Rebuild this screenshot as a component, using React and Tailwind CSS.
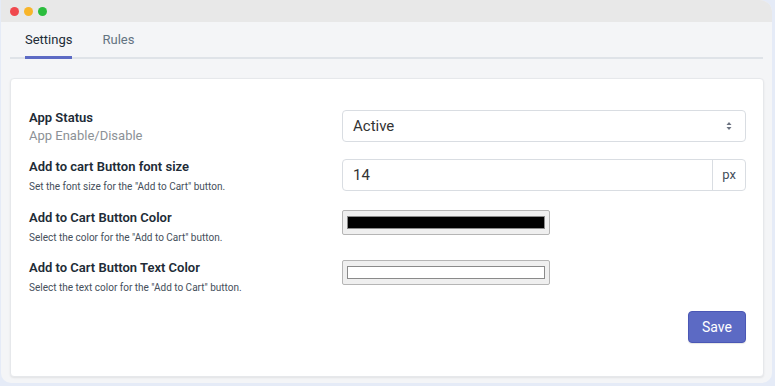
import { useState } from 'react';

const rows = [
  {
    title: 'Add to cart Button font size',
    hint: 'Set the font size for the "Add to Cart" button.',
    kind: 'size',
    gap: 'mt-[15px]',
  },
  {
    title: 'Add to Cart Button Color',
    hint: 'Select the color for the "Add to Cart" button.',
    kind: 'color',
    swatch: 'bg-black',
    gap: 'mt-[16px]',
  },
  {
    title: 'Add to Cart Button Text Color',
    hint: 'Select the text color for the "Add to Cart" button.',
    kind: 'color',
    swatch: 'bg-white',
    gap: 'mt-[15px]',
  },
];

function ColorBox({ swatch }) {
  return (
    <div className="w-[208px] h-[25px] border border-[#b5b5b5] rounded-[2px] bg-[#efefef] px-[4px] py-[5px]">
      <div className={`w-full h-full border border-[#8a8a8a] ${swatch}`} />
    </div>
  );
}

function SelectArrows() {
  return (
    <svg width="8" height="10" viewBox="0 0 8 10" className="text-[#6b7280]">
      <path d="M4 1 L6.5 4 H1.5 Z" fill="currentColor" />
      <path d="M4 9 L6.5 6 H1.5 Z" fill="currentColor" />
    </svg>
  );
}

export default function App() {
  const [tab, setTab] = useState('settings');

  return (
    <div className="w-[775px] h-[386px] bg-[#e5ebf7] pl-[1px] pr-[3px] pb-[3px] font-['Roboto',sans-serif] overflow-hidden">
      <div className="h-full bg-[#f4f5f7] rounded-tr-[12px] rounded-b-[10px] overflow-hidden flex flex-col">
        {/* title bar */}
        <div className="h-[22px] bg-[#e8e8e8] flex items-center gap-[5px] pl-[9px] shrink-0">
          <span className="w-[9px] h-[9px] rounded-full bg-[#f0494e]" />
          <span className="w-[9px] h-[9px] rounded-full bg-[#f8b52a]" />
          <span className="w-[9px] h-[9px] rounded-full bg-[#2bbd3d]" />
        </div>

        {/* tabs */}
        <div className="mx-[9px] mt-[9px] border-b-2 border-[#dfe3e8] flex gap-[30px] pl-[15px] h-[28px]">
          {[
            ['settings', 'Settings'],
            ['rules', 'Rules'],
          ].map(([key, label]) => (
            <button
              key={key}
              onClick={() => setTab(key)}
              className={`text-[13px] leading-[16px] -mb-[2px] border-b-[3px] pb-[7px] ${
                tab === key
                  ? 'text-[#212b36] border-[#5c6ac4]'
                  : 'text-[#637381] border-transparent'
              }`}
            >
              {label}
            </button>
          ))}
        </div>

        {/* card */}
        <div className="ml-[9px] mt-[19px] mr-[8px] bg-white rounded-[4px] border border-[#e6e8eb] shadow-[0_1px_2px_rgba(0,0,0,0.08)] pl-[18px] pr-[17px] pt-[31px] pb-[33px] flex flex-col">
          <div className="flex items-start">
            <div className="w-[313px] shrink-0">
              <div className="text-[13px] leading-[16px] font-semibold text-[#212b36]">App Status</div>
              <div className="text-[13px] leading-[17px] mt-[1px] text-[#8c9196]">App Enable/Disable</div>
            </div>
            <div className="flex-1 h-[32px] border border-[#d9dde2] rounded-[4px] flex items-center justify-between pl-[10px] pr-[12px] text-[15px] text-[#333]">
              <span>Active</span>
              <SelectArrows />
            </div>
          </div>

          {rows.map((row) => (
            <div key={row.title} className={`flex items-start ${row.gap}`}>
              <div className="w-[313px] shrink-0">
                <div className="text-[13px] leading-[16px] font-semibold text-[#212b36]">{row.title}</div>
                <div className="text-[10px] leading-[14px] mt-[5px] text-[#454f5b]">{row.hint}</div>
              </div>
              {row.kind === 'size' ? (
                <div className="flex-1 h-[32px] border border-[#d9dde2] rounded-[4px] flex text-[15px] text-[#333]">
                  <div className="flex-1 flex items-center pl-[10px]">14</div>
                  <div className="w-[33px] border-l border-[#d9dde2] flex items-center justify-center text-[13px] text-[#454f5b]">
                    px
                  </div>
                </div>
              ) : (
                <ColorBox swatch={row.swatch} />
              )}
            </div>
          ))}

          <div className="flex justify-end mt-[16px]">
            <button className="w-[58px] h-[32px] rounded-[4px] bg-[#5c6ac4] border border-[#4a57b5] text-white text-[14px] shadow-[0_1px_1px_rgba(0,0,0,0.1)]">
              Save
            </button>
          </div>
        </div>
      </div>
    </div>
  );
}
